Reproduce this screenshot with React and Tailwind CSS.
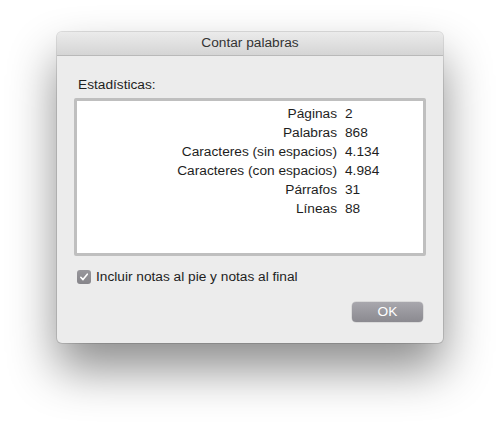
import React from "react";

const stats = [
    { label: "Páginas", value: "2" },
    { label: "Palabras", value: "868" },
    { label: "Caracteres (sin espacios)", value: "4.134" },
    { label: "Caracteres (con espacios)", value: "4.984" },
    { label: "Párrafos", value: "31" },
    { label: "Líneas", value: "88" },
];

export default function App() {
    return (
        <div className="w-[500px] h-[424px] bg-white overflow-hidden pt-[32px] font-['Liberation_Sans',Arial,sans-serif] text-[13.7px] text-[#1e1e1e]">
            <div className="mx-auto w-[386px] rounded-[5px] bg-[#ececec] shadow-[0_26px_48px_rgba(0,0,0,0.45),0_0_0_1px_rgba(0,0,0,0.12)] overflow-hidden">
                {/* title bar */}
                <div className="h-[24px] flex items-center justify-center bg-gradient-to-b from-[#ebebeb] to-[#d5d5d5] border-b border-[#b9b9b9] text-[13.7px] text-[#333]">
                    Contar palabras
                </div>

                <div className="px-[17px] pt-[21px] pb-[21px]">
                    <div className="pl-[4px] leading-[16px]">Estadísticas:</div>

                    <div className="mt-[5px] h-[158px] border-[3px] border-[#bfbfbf] rounded-[2px] bg-white pt-[3px]">
                        <div className="grid grid-cols-[260px_1fr] gap-x-[8px]">
                            {stats.map((s) => (
                                <React.Fragment key={s.label}>
                                    <div className="h-[19px] leading-[19px] text-right">{s.label}</div>
                                    <div className="h-[19px] leading-[19px]">{s.value}</div>
                                </React.Fragment>
                            ))}
                        </div>
                    </div>

                    <div className="mt-[14px] pl-[3px] flex items-center gap-[5px] h-[14px]">
                        <div className="w-[14px] h-[14px] rounded-[3px] bg-gradient-to-b from-[#98979c] to-[#86858a] flex items-center justify-center">
                            <svg width="10" height="10" viewBox="0 0 10 10">
                                <path d="M1.8 5.3 L4 7.6 L8.3 2.2" fill="none" stroke="white" strokeWidth="1.6" strokeLinecap="round" strokeLinejoin="round" />
                            </svg>
                        </div>
                        <span className="leading-[16px]">Incluir notas al pie y notas al final</span>
                    </div>

                    <div className="mt-[18px] flex justify-end pr-[3px]">
                        <button className="w-[71px] h-[20px] rounded-[4px] bg-gradient-to-b from-[#a8a7ad] to-[#8b8a90] text-white text-[13.7px] leading-[20px] shadow-[0_0_0_0.5px_rgba(0,0,0,0.15)]">
                            OK
                        </button>
                    </div>
                </div>
            </div>
        </div>
    );
}
